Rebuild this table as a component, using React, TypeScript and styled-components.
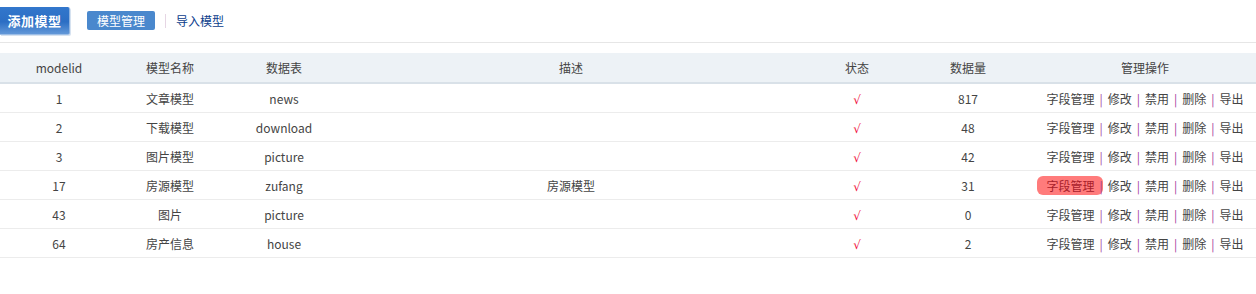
import React from "react";
import styled, { createGlobalStyle } from "styled-components";

const Global = createGlobalStyle`
  html, body { margin: 0; padding: 0; background: #fff; }
  body { font-family: "Noto Sans CJK SC", "Noto Sans", sans-serif; font-size: 12px; color: #444; }
`;

const Page = styled.div`
  width: 1256px;
`;

const Toolbar = styled.div`
  display: flex;
  align-items: center;
  height: 43px;
  border-bottom: 1px solid #e6e6e6;
  box-sizing: border-box;
  padding-bottom: 1px;
`;

const PrimaryButton = styled.div`
  width: 69px;
  height: 27px;
  display: flex;
  align-items: center;
  justify-content: center;
  color: #fff;
  font-weight: bold;
  font-size: 13px;
  background: linear-gradient(#3277cc 0%, #2c6ec4 55%, #6298d8 100%);
  border-right: 1px solid #8fb3e0;
  border-bottom: 1px solid #9bbde6;
  border-radius: 0 2px 2px 0;
  box-shadow: 1px 1px 0 #d6e2f0;
  letter-spacing: 0.5px;
`;

const TabButton = styled.div`
  margin-left: 17px;
  width: 68px;
  height: 19px;
  display: flex;
  align-items: center;
  justify-content: center;
  background: #4a88cd;
  color: #fff;
  border-radius: 2px;
  font-size: 12px;
`;

const Sep = styled.span`
  width: 1px;
  height: 14px;
  background: #e6d6e4;
  margin: 0 10px 0 10px;
`;

const Link = styled.span`
  color: #0b3d8c;
  font-size: 12px;
`;

const Table = styled.table`
  margin-top: 10px;
  width: 1256px;
  border-collapse: collapse;
  table-layout: fixed;
`;

const HeadCell = styled.th<{ $pl?: number }>`
  height: 29px;
  padding: 0 0 0 ${(p) => p.$pl ?? 0}px;
  background: #edf2f6;
  border-bottom: 2px solid #d9e1e8;
  font-weight: normal;
  color: #444;
  text-align: center;
  font-size: 12px;
`;

const Cell = styled.td<{ $pl?: number }>`
  height: 28px;
  padding: 0 0 0 ${(p) => p.$pl ?? 0}px;
  border-bottom: 1px solid #ececec;
  text-align: center;
  color: #444;
  font-size: 12px;
  white-space: nowrap;
`;

const Check = styled.span`
  color: #f0103c;
  font-family: "DejaVu Sans", sans-serif;
  font-size: 12px;
`;

const Op = styled.span<{ $hot?: boolean }>`
  display: inline-block;
  padding: 1px ${(p) => (p.$hot ? "9px" : "0")};
  margin-left: ${(p) => (p.$hot ? "-9px" : "0")};
  margin-right: ${(p) => (p.$hot ? "-9px" : "0")};
  border-radius: 6px;
  background: ${(p) => (p.$hot ? "#ff7b7b" : "transparent")};
  color: ${(p) => (p.$hot ? "#a8202a" : "#444")};
`;

const Bar = styled.span`
  color: #a3399c;
  margin: 0 5px;
`;

const widths = [118, 104, 124, 450, 122, 100, 238];

const rows = [
  { id: "1", name: "文章模型", table: "news", desc: "", count: "817" },
  { id: "2", name: "下载模型", table: "download", desc: "", count: "48" },
  { id: "3", name: "图片模型", table: "picture", desc: "", count: "42" },
  { id: "17", name: "房源模型", table: "zufang", desc: "房源模型", count: "31", hot: true },
  { id: "43", name: "图片", table: "picture", desc: "", count: "0" },
  { id: "64", name: "房产信息", table: "house", desc: "", count: "2" },
];

const ops = ["修改", "禁用", "删除", "导出"];

export default function App() {
  return (
    <Page>
      <Global />
      <Toolbar>
        <PrimaryButton>添加模型</PrimaryButton>
        <TabButton>模型管理</TabButton>
        <Sep />
        <Link>导入模型</Link>
      </Toolbar>
      <Table>
        <colgroup>
          {widths.map((w, i) => (
            <col key={i} style={{ width: w }} />
          ))}
        </colgroup>
        <thead>
          <tr>
            <HeadCell>modelid</HeadCell>
            <HeadCell>模型名称</HeadCell>
            <HeadCell>数据表</HeadCell>
            <HeadCell>描述</HeadCell>
            <HeadCell>状态</HeadCell>
            <HeadCell>数据量</HeadCell>
            <HeadCell $pl={16}>管理操作</HeadCell>
          </tr>
        </thead>
        <tbody>
          {rows.map((r) => (
            <tr key={r.id}>
              <Cell>{r.id}</Cell>
              <Cell>{r.name}</Cell>
              <Cell>{r.table}</Cell>
              <Cell>{r.desc}</Cell>
              <Cell>
                <Check>√</Check>
              </Cell>
              <Cell>{r.count}</Cell>
              <Cell $pl={16}>
                <Op $hot={r.hot}>字段管理</Op>
                {ops.map((o) => (
                  <React.Fragment key={o}>
                    <Bar>|</Bar>
                    <Op>{o}</Op>
                  </React.Fragment>
                ))}
              </Cell>
            </tr>
          ))}
        </tbody>
      </Table>
    </Page>
  );
}
